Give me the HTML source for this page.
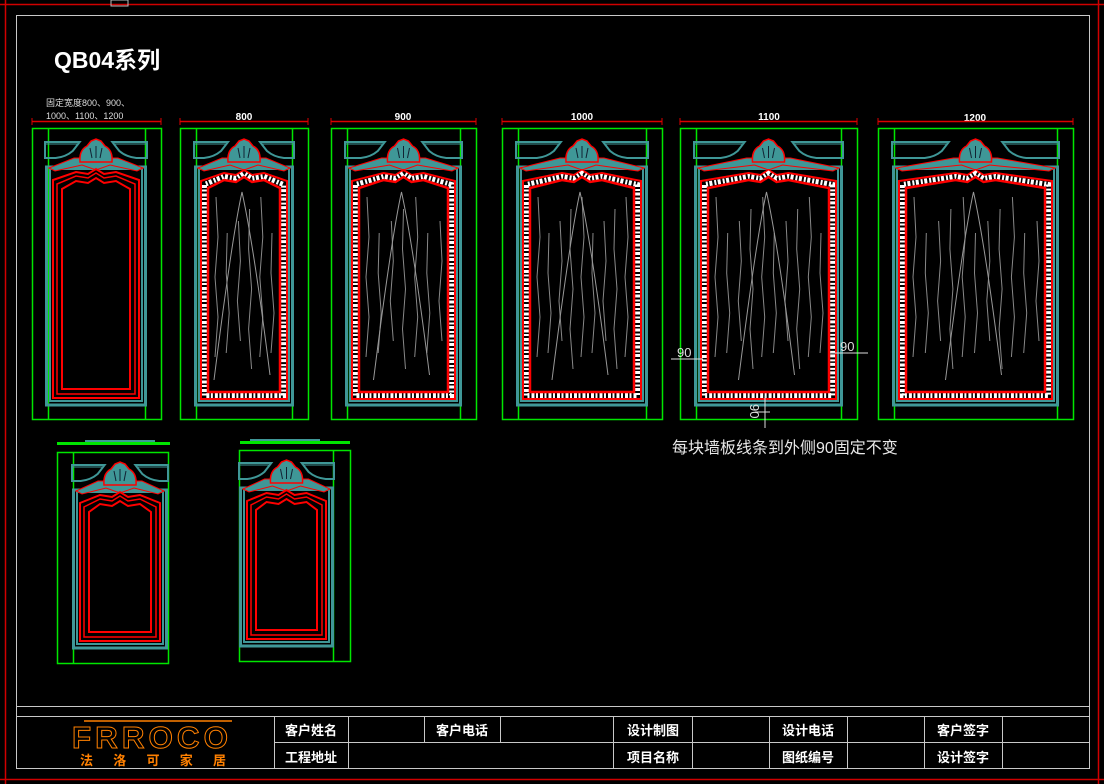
<!DOCTYPE html>
<html><head><meta charset="utf-8"><style>
html,body{margin:0;padding:0;background:#000;width:1104px;height:784px;overflow:hidden}
svg{display:block}
text{font-family:"Liberation Sans","Noto Sans CJK SC",sans-serif}
</style></head><body>
<svg id="s" width="1104" height="784" viewBox="0 0 1104 784" xmlns="http://www.w3.org/2000/svg">
<rect width="1104" height="784" fill="#000"/>
<line x1="0" y1="4.5" x2="1104" y2="4.5" stroke="#d00000" stroke-width="1.5"/>
<line x1="5.5" y1="0" x2="5.5" y2="784" stroke="#d00000" stroke-width="1.5"/>
<line x1="0" y1="779.5" x2="1104" y2="779.5" stroke="#d00000" stroke-width="1.5"/>
<line x1="1098.5" y1="0" x2="1098.5" y2="784" stroke="#d00000" stroke-width="1.5"/>
<rect x="111" y="0" width="17" height="6" fill="none" stroke="#bbb" stroke-width="1"/>
<rect x="16.5" y="15.5" width="1073" height="753" fill="none" stroke="#c8c8c8" stroke-width="1"/>
<text x="54" y="68" fill="#fff" font-size="23" font-weight="bold">QB04系列</text>
<text x="46" y="106" fill="#ddd" font-size="9">固定宽度800、900、</text>
<text x="46" y="119" fill="#ddd" font-size="9">1000、1100、1200</text>
<g font-size="10" fill="#fff" font-weight="bold" text-anchor="middle">
<text x="244" y="120">800</text>
<text x="403" y="120">900</text>
<text x="582" y="120">1000</text>
<text x="769" y="120">1100</text>
<text x="975" y="121">1200</text>
</g>
<g id="panels"></g>
<g stroke="#ddd" stroke-width="1" fill="none">
<line x1="671" y1="359" x2="703" y2="359"/><line x1="830" y1="353" x2="868" y2="353"/>
<line x1="765" y1="396" x2="765" y2="428"/><line x1="755" y1="412" x2="770" y2="412"/>
</g>
<text x="677" y="357" fill="#ddd" font-size="13">90</text>
<text x="840" y="351" fill="#ddd" font-size="13">90</text>
<text x="0" y="0" fill="#ddd" font-size="13" transform="translate(750,404) rotate(90)">90</text>
<text x="672" y="453" fill="#e8e8e8" font-size="16">每块墙板线条到外侧90固定不变</text>
<g stroke="#c8c8c8" stroke-width="1" fill="none">
<line x1="16" y1="706.5" x2="1090" y2="706.5"/>
<line x1="16" y1="716.5" x2="1090" y2="716.5"/>
<line x1="274" y1="742.5" x2="1090" y2="742.5"/>
<line x1="274.5" y1="716" x2="274.5" y2="768"/>
<line x1="348.5" y1="716" x2="348.5" y2="768"/>
<line x1="424.5" y1="716" x2="424.5" y2="742"/>
<line x1="500.5" y1="716" x2="500.5" y2="742"/>
<line x1="613.5" y1="716" x2="613.5" y2="768"/>
<line x1="692.5" y1="716" x2="692.5" y2="768"/>
<line x1="769.5" y1="716" x2="769.5" y2="768"/>
<line x1="847.5" y1="716" x2="847.5" y2="768"/>
<line x1="924.5" y1="716" x2="924.5" y2="768"/>
<line x1="1002.5" y1="716" x2="1002.5" y2="768"/>
</g>
<g fill="#fff" font-size="13" font-weight="bold" text-anchor="middle">
<text x="311" y="735">客户姓名</text><text x="311" y="762">工程地址</text>
<text x="462" y="735">客户电话</text>
<text x="653" y="735">设计制图</text><text x="653" y="762">项目名称</text>
<text x="808" y="735">设计电话</text><text x="808" y="762">图纸编号</text>
<text x="963" y="735">客户签字</text><text x="963" y="762">设计签字</text>
</g>
<text x="152" y="748" fill="none" stroke="#ff8000" stroke-width="1" font-family="Liberation Serif,serif" font-size="31" font-weight="bold" text-anchor="middle" letter-spacing="4" textLength="160" lengthAdjust="spacingAndGlyphs">FRROCO</text>
<line x1="84" y1="721" x2="232" y2="721" stroke="#ff8000" stroke-width="1.5"/>
<text x="80" y="765" fill="#ff8000" font-size="13" font-weight="bold" textLength="146" lengthAdjust="spacing">法洛可家居</text>
</svg>
<script>
var g=document.getElementById('panels'),h='';
var T='#3f9797',R='#ff0000',G='#00e600';
function panel(gx1,gx2,gy1,gy2,vx1,vx2,tx1,tx2,ty1,ty2,grain,dim){
 var o='';
 if(dim){o+='<line x1="'+gx1+'" y1="121.5" x2="'+gx2+'" y2="121.5" stroke="#d00" stroke-width="1.5"/>';
  o+='<line x1="'+gx1+'" y1="118" x2="'+gx1+'" y2="125" stroke="#d00"/><line x1="'+gx2+'" y1="118" x2="'+gx2+'" y2="125" stroke="#d00"/>';}
 o+='<rect x="'+gx1+'.5" y="'+gy1+'.5" width="'+(gx2-gx1)+'" height="'+(gy2-gy1)+'" fill="none" stroke="'+G+'" stroke-width="1.5"/>';
 vx1&&(o+='<line x1="'+vx1+'.5" y1="'+gy1+'" x2="'+vx1+'.5" y2="'+gy2+'" stroke="'+G+'" stroke-width="1.5"/>');
 vx2&&(o+='<line x1="'+vx2+'.5" y1="'+gy1+'" x2="'+vx2+'.5" y2="'+gy2+'" stroke="'+G+'" stroke-width="1.5"/>');
 var xc=(tx1+tx2)/2,w=tx2-tx1,fy=ty1+25,bw=w*0.34;
 // header boxes
 o+='<path d="M'+tx1+' '+ty1+'H'+(tx1+bw)+'L'+(tx1+bw-7)+' '+(ty1+9)+'Q'+(tx1+bw-14)+' '+(ty1+15)+' '+(tx1+bw-24)+' '+(ty1+16)+'H'+tx1+'Z" fill="none" stroke="'+T+'" stroke-width="2"/>';
 o+='<path d="M'+tx2+' '+ty1+'H'+(tx2-bw)+'L'+(tx2-bw+7)+' '+(ty1+9)+'Q'+(tx2-bw+14)+' '+(ty1+15)+' '+(tx2-bw+24)+' '+(ty1+16)+'H'+tx2+'Z" fill="none" stroke="'+T+'" stroke-width="2"/>';
 o+='<line x1="'+tx1+'" y1="'+(ty1+2)+'" x2="'+(tx1+bw-2)+'" y2="'+(ty1+2)+'" stroke="'+T+'" stroke-width="1"/><line x1="'+tx2+'" y1="'+(ty1+2)+'" x2="'+(tx2-bw+2)+'" y2="'+(ty1+2)+'" stroke="'+T+'" stroke-width="1"/>';
 // teal frame
 o+='<rect x="'+(tx1+1.5)+'" y="'+fy+'" width="'+(w-3)+'" height="'+(ty2-fy)+'" fill="none" stroke="'+T+'" stroke-width="3"/>';
 o+='<rect x="'+(tx1+5)+'" y="'+(fy+2)+'" width="'+(w-10)+'" height="'+(ty2-fy-6)+'" fill="none" stroke="'+T+'" stroke-width="2"/>';
 // shoulders
 o+='<path d="M'+(tx1+4)+' '+(fy+1)+' L'+(xc-22)+' '+(fy-9)+' L'+(xc+22)+' '+(fy-9)+' L'+(tx2-4)+' '+(fy+1)+' L'+(tx2-10)+' '+(fy+4)+' L'+(xc+14)+' '+(fy-2)+' L'+xc+' '+(fy+3)+' L'+(xc-14)+' '+(fy-2)+' L'+(tx1+10)+' '+(fy+4)+'Z" fill="'+T+'" stroke="'+R+'" stroke-width="1"/>';
 // crest
 o+='<path d="M'+(xc-16)+' '+(fy-5)+' Q'+(xc-17)+' '+(ty1+8)+' '+(xc-9)+' '+(ty1+4)+' L'+(xc-5)+' '+(ty1-1)+' L'+xc+' '+(ty1-3)+' L'+(xc+5)+' '+(ty1-1)+' L'+(xc+9)+' '+(ty1+4)+' Q'+(xc+17)+' '+(ty1+8)+' '+(xc+16)+' '+(fy-5)+'Z" fill="'+T+'" stroke="'+R+'" stroke-width="1.5"/>';
 o+='<path d="M'+(xc-6)+' '+(ty1+6)+'l2 10M'+xc+' '+(ty1+4)+'v12M'+(xc+6)+' '+(ty1+6)+'l-2 10" stroke="#123" stroke-width="1"/>';
 function arch(x1,x2,yt,yb){return 'M'+x1+' '+yb+' L'+x1+' '+(yt+9)+' L'+(xc-20)+' '+(yt+1)+' L'+(xc-8)+' '+(yt+3)+' L'+xc+' '+(yt-2)+' L'+(xc+8)+' '+(yt+3)+' L'+(xc+20)+' '+(yt+1)+' L'+x2+' '+(yt+9)+' L'+x2+' '+yb+' Z';}
 if(grain){
  o+='<path d="'+arch(tx1+7,tx2-7,fy+5,ty2-6)+'" fill="#000" stroke="'+R+'" stroke-width="2"/>';
  o+='<path d="'+arch(tx1+10.5,tx2-10.5,fy+8.5,ty2-9.5)+'" fill="none" stroke="#fff" stroke-width="5" stroke-dasharray="2 1.5 3 2"/>';
  o+='<path d="'+arch(tx1+14,tx2-14,fy+12,ty2-13)+'" fill="#000" stroke="'+R+'" stroke-width="2.5"/>';
  var n=Math.round((w-30)/12);
  for(var i=0;i<n;i++){var x=tx1+22+i*(w-44)/(n-1);var y0=fy+30+((i*7)%4)*12;var d='M'+x.toFixed(1)+' '+y0;
   var k=0;for(var y=y0+40;y<ty2-25;y+=40){k++;d+=' L'+(x+((k+i)%2?2:-1)).toFixed(1)+' '+y;}
   o+='<path d="'+d+'" fill="none" stroke="#888" stroke-width="1"/>';}
  o+='<path d="M'+(xc-30)+' '+(ty2-25)+' Q'+(xc-12)+' '+(fy+70)+' '+(xc-2)+' '+(fy+25)+' Q'+(xc+10)+' '+(fy+80)+' '+(xc+26)+' '+(ty2-30)+'" fill="none" stroke="#999" stroke-width="1"/>';
 } else {
  o+='<path d="'+arch(tx1+8,tx2-8,fy+4,ty2-7)+'" fill="none" stroke="'+R+'" stroke-width="2"/>';
  o+='<path d="'+arch(tx1+12,tx2-12,fy+8,ty2-11)+'" fill="none" stroke="'+R+'" stroke-width="1.5"/>';
  o+='<path d="'+arch(tx1+17,tx2-17,fy+13,ty2-16)+'" fill="none" stroke="'+R+'" stroke-width="2"/>';
 }
 return o;
}
h+=panel(32,161,128,419,48,145,45,147,142,405,false,true);
h+=panel(180,308,128,419,196,292,194,294,142,405,true,true);
h+=panel(331,476,128,419,347,460,345,462,142,405,true,true);
h+=panel(502,662,128,419,518,646,516,648,142,405,true,true);
h+=panel(680,857,128,419,696,841,694,843,142,405,true,true);
h+=panel(878,1073,128,419,894,1057,892,1059,142,405,true,true);
h+='<rect x="57" y="442" width="113" height="3" fill="'+G+'"/><line x1="85" y1="441" x2="155" y2="441" stroke="'+T+'" stroke-width="2"/>';
h+='<rect x="240" y="441" width="110" height="3" fill="'+G+'"/><line x1="250" y1="440" x2="320" y2="440" stroke="'+T+'" stroke-width="2"/>';
h+=panel(57,168,452,663,73,0,72,168,465,648,false,false);
h+=panel(239,350,450,661,0,333,239,334,463,646,false,false);
g.innerHTML=h;
</script>
</body></html>
